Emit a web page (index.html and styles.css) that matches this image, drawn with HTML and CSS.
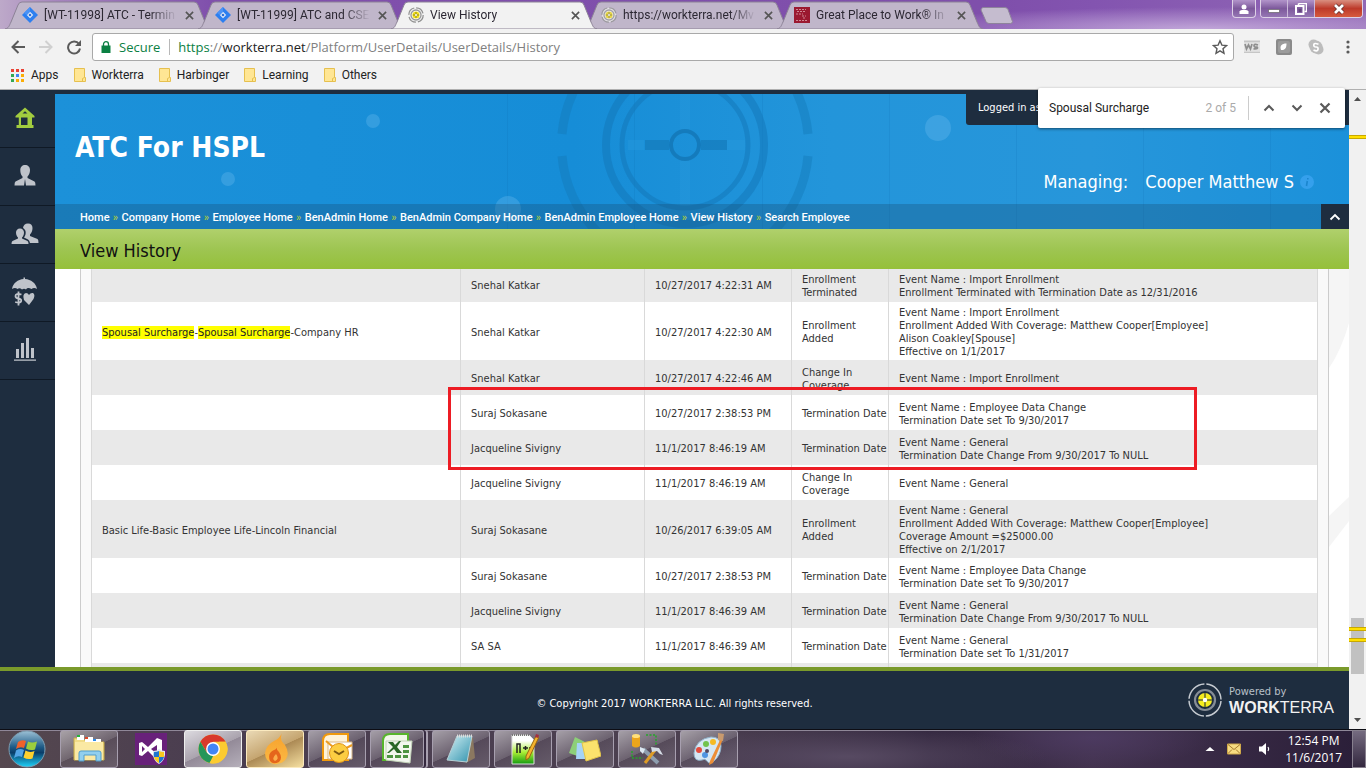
FILE: index.html
```html
<!DOCTYPE html>
<html lang="en">
<head>
<meta charset="utf-8">
<title>View History</title>
<link rel="stylesheet" href="styles.css">
</head>
<body>
<svg class="defs" width="0" height="0" aria-hidden="true">
  <defs>
    <symbol id="x" viewBox="0 0 10 10"><path d="M1 1l8 8M9 1l-8 8" stroke="currentColor" stroke-width="1.8" fill="none"/></symbol>
    <symbol id="jira" viewBox="0 0 16 16"><path d="M8 0l8 8-8 8-8-8z" fill="#2d7ff0"/><path d="M8 4.800l3.200 3.200L8 11.200 4.800 8z" fill="#e3ebf8"/><path d="M8 0v4.800L4.800 8 2 6z" fill="#4b92f5"/><circle cx="8" cy="8" r="1.300" fill="#2d6fd6"/></symbol>
    <symbol id="target" viewBox="0 0 16 16"><circle cx="8" cy="8" r="7.200" fill="#f0f0f0" stroke="#8f8f8f" stroke-width="1.200" stroke-dasharray="9.300 2"/><circle cx="8" cy="8" r="5" fill="#fff" stroke="#999" stroke-width="1.300"/><circle cx="8" cy="8" r="3.600" fill="#f3e11a"/><path d="M5 8h6M8 5v6" stroke="#8d8223"/><circle cx="8" cy="8" r="1" fill="#fff"/></symbol>
    <symbol id="tabshape" viewBox="0 0 206 28" preserveAspectRatio="none"><path d="M0 28C4 27 4 25 6 21L13 4Q14 1 17 1H189Q192 1 193 4L200 21C202 25 202 27 206 28z" stroke="#8c8296"/></symbol>
    <symbol id="folder" viewBox="0 0 12 14"><path d="M.5.5h10v9h1v4h-11z" fill="#ffe694" stroke="#e6c04f"/><path d="M8.500 13.500v-3l2-1" fill="none" stroke="#e6c04f"/></symbol>
    <linearGradient id="glass" x1="0" y1="0" x2="0" y2="1"><stop offset="0" stop-color="#9cc1d6"/><stop offset=".45" stop-color="#1d5a86"/><stop offset=".6" stop-color="#0a3d69"/><stop offset="1" stop-color="#1cd3fa"/></linearGradient>
    <linearGradient id="fire" x1="0" y1="0" x2="0" y2="1"><stop offset="0" stop-color="#f7a12c"/><stop offset="1" stop-color="#fbb944"/></linearGradient>
    <linearGradient id="pad" x1="0" y1="0" x2="1" y2="1"><stop offset="0" stop-color="#d3f0f4"/><stop offset="1" stop-color="#3193ae"/></linearGradient>
    <linearGradient id="npp" x1="0" y1="0" x2="0" y2="1"><stop offset=".2" stop-color="#fff"/><stop offset=".6" stop-color="#a9ed35"/><stop offset="1" stop-color="#129b10"/></linearGradient>
  </defs>
</svg>

<header class="browser">
  <div class="strip">
    <nav class="tabs" aria-label="Browser tabs">
      <div class="tab"><svg class="shape"><use href="#tabshape"/></svg><svg class="fav"><use href="#jira"/></svg><a href="#" class="tabname">[WT-11998] ATC - Termin</a><button class="tabclose" aria-label="Close tab"><svg><use href="#x"/></svg></button></div>
      <div class="tab"><svg class="shape"><use href="#tabshape"/></svg><svg class="fav"><use href="#jira"/></svg><a href="#" class="tabname">[WT-11999] ATC and CSE</a><button class="tabclose" aria-label="Close tab"><svg><use href="#x"/></svg></button></div>
      <div class="tab active"><svg class="shape"><use href="#tabshape"/></svg><svg class="fav"><use href="#target"/></svg><a href="#" class="tabname">View History</a><button class="tabclose" aria-label="Close tab"><svg><use href="#x"/></svg></button></div>
      <div class="tab"><svg class="shape"><use href="#tabshape"/></svg><svg class="fav dim"><use href="#target"/></svg><a href="#" class="tabname">https://workterra.net/Mv</a><button class="tabclose" aria-label="Close tab"><svg><use href="#x"/></svg></button></div>
      <div class="tab"><svg class="shape"><use href="#tabshape"/></svg><svg class="fav" viewBox="0 0 16 16"><path d="M0 0h16v16H0z" fill="#9b1930"/><path d="M2 2.500h10M3 4.500h9M2 7h7M8 9h4M9 11h3M2 13.500h12" stroke="#cf8793" stroke-dasharray="2 1"/></svg><a href="#" class="tabname">Great Place to Work® In</a><button class="tabclose" aria-label="Close tab"><svg><use href="#x"/></svg></button></div>
    </nav>
    <button class="newtab" aria-label="New tab"><svg viewBox="0 0 34 17"><path d="M3 .5h22q2 0 3 2l4.500 12q0 2-2 2H9q-2 0-3-2L1 3q0-2 2-2.500z" fill="#c5bccf" stroke="#8e839b"/></svg></button>
    <div class="winbtns">
      <button class="wb user" aria-label="Profile"><svg viewBox="0 0 12 12"><circle cx="6" cy="4" r="2.500"/><path d="M1.500 11V8.500Q2 7 4 7h4q2 0 2.500 1.500V11z"/></svg></button>
      <div class="wingroup">
        <button class="wb" aria-label="Minimize"><svg viewBox="0 0 12 12"><path d="M.5 6.500h11v3H.5z" stroke="#555" stroke-width=".6"/></svg></button>
        <button class="wb" aria-label="Restore"><svg viewBox="0 0 12 12"><path d="M3.500.5h8v8h-2M3.500.5v2" fill="none" stroke="#fff" stroke-width="1.500"/><path d="M1 3h7.500v8H1z" fill="none" stroke="#fff" stroke-width="2"/><path d="M3.500 6h3v3h-3z" fill="#63467c"/></svg></button>
        <button class="wb closewin" aria-label="Close"><svg viewBox="0 0 12 12"><path d="M2 2l8 8M10 2l-8 8" stroke="#5b2a2a" stroke-width="4.200"/><path d="M2 2l8 8M10 2l-8 8" stroke="#fff" stroke-width="2.800"/></svg></button>
      </div>
    </div>
  </div>

  <div class="toolbar">
    <button class="tool" aria-label="Back"><svg viewBox="0 0 16 16"><path d="M8.500 2L2.500 8l6 6M2.500 8H15" fill="none" stroke="#5a5a5a" stroke-width="2"/></svg></button>
    <button class="tool" aria-label="Forward"><svg viewBox="0 0 16 16"><path d="M7.500 2l6 6-6 6M13.500 8H1" fill="none" stroke="#d0d0d0" stroke-width="2"/></svg></button>
    <button class="tool" aria-label="Reload"><svg viewBox="0 0 16 16"><path d="M13 5A6 6 0 1 0 14 9.500" fill="none" stroke="#5a5a5a" stroke-width="2"/><path d="M15 1v6H9z" fill="#5a5a5a"/></svg></button>
    <div class="omni">
      <svg class="lock" viewBox="0 0 10 12"><path d="M.5 4.500h9V12h-9z" fill="#0b8043"/><path d="M2.500 5V3.200a2.500 2.500 0 0 1 5 0V5" fill="none" stroke="#0b8043" stroke-width="1.300"/></svg>
      <span class="secure">Secure</span><span class="bar"></span>
      <div class="url" role="textbox" aria-label="Address" tabindex="0"><span class="scheme">https</span>://<span class="host">workterra.net</span>/Platform/UserDetails/UserDetails/History</div>
      <button class="star" aria-label="Bookmark"><svg viewBox="0 0 16 16"><path d="M8 1.800l1.900 4.300 4.600.5-3.500 3.100 1 4.600L8 11.900l-4 2.400 1-4.600L1.500 6.600l4.600-.5z" fill="none" stroke="#5a5a5a" stroke-width="1.400"/></svg></button>
    </div>
    <div class="exts">
      <button aria-label="WS"><svg viewBox="0 0 16 16"><path d="M0 1.500h16v2H0zM0 12.500h16v1.500H0z" fill="#c6c6c6"/><path d="M0 4h16v8H0z" fill="#e2e2e2"/><path d="M1 5l1.500 5L4.500 6l2 4L8 5M14 6q-4-1.500-4 .6t3 1.400q2 2.200-3.500 1.800" fill="none" stroke="#8e8e8e" stroke-width="1.700"/></svg></button>
      <button aria-label="Extension"><svg viewBox="0 0 16 16"><rect width="16" height="16" rx="2" fill="#8a8a8a"/><rect x="2" y="2" width="12" height="12" rx="2" fill="#9c9c9c"/><path d="M5 11c-1.500-4 .5-6.500 5.500-6.500 0 4.500-1.500 7-5.500 6.500z" fill="#fff"/></svg></button>
      <button aria-label="Skype"><svg viewBox="0 0 16 16"><circle cx="5.500" cy="5.500" r="5" fill="#bcbcbc"/><circle cx="10.500" cy="10.500" r="5" fill="#bcbcbc"/><circle cx="8" cy="8" r="6.500" fill="#bcbcbc"/><path d="M10.500 5.300Q6 3.500 5.800 5.800T8 8t2 2.400-4.500.6" fill="none" stroke="#fff" stroke-width="1.700"/></svg></button>
      <button aria-label="Menu"><svg viewBox="0 0 16 16" fill="#5a5a5a"><circle cx="8" cy="3" r="1.600"/><circle cx="8" cy="8" r="1.600"/><circle cx="8" cy="13" r="1.600"/></svg></button>
    </div>
  </div>

  <nav class="bookmarks" aria-label="Bookmarks">
    <a href="#"><svg class="apps" viewBox="0 0 13 13"><path d="M0 0h3v3H0zM5 0h3v3H5zM10 0h3v3h-3z" fill="#ea4335"/><path d="M0 5h3v3H0zM0 10h3v3H0z" fill="#34a853"/><path d="M5 5h3v3H5z" fill="#4285f4"/><path d="M10 5h3v3h-3zM5 10h3v3H5zM10 10h3v3h-3z" fill="#fbad05"/></svg>Apps</a>
    <a href="#"><svg class="folder"><use href="#folder"/></svg>Workterra</a>
    <a href="#"><svg class="folder"><use href="#folder"/></svg>Harbinger</a>
    <a href="#"><svg class="folder"><use href="#folder"/></svg>Learning</a>
    <a href="#"><svg class="folder"><use href="#folder"/></svg>Others</a>
  </nav>

  <form class="find" role="search">
    <input type="text" value="Spousal Surcharge" aria-label="Find in page">
    <span class="count">2 of 5</span>
    <span class="findsep"></span>
    <button type="button" aria-label="Previous"><svg viewBox="0 0 12 12"><path d="M1.500 8.500L6 4l4.500 4.500" fill="none" stroke="#5a5a5a" stroke-width="2"/></svg></button>
    <button type="button" aria-label="Next"><svg viewBox="0 0 12 12"><path d="M1.500 3.500L6 8l4.500-4.500" fill="none" stroke="#5a5a5a" stroke-width="2"/></svg></button>
    <button type="button" aria-label="Close find bar"><svg viewBox="0 0 12 12"><path d="M1.500 1.500l9 9M10.500 1.500l-9 9" fill="none" stroke="#5a5a5a" stroke-width="2.200"/></svg></button>
  </form>
</header>

<div class="viewport">
  <div class="site">
    <div class="upper">
      <nav class="side" aria-label="Main">
        <a href="#" aria-label="Home" class="current"><svg viewBox="0 0 28 28"><path d="M14 4.500L4.500 13v1.500h3.300V22H5.500v3h17v-3h-1.500v-7.500h2.500V13zM14 8.200l2.500 2.300h-5zM10 14.500h6.500V22H10z" fill-rule="evenodd"/></svg></a>
        <a href="#" aria-label="Employee"><svg viewBox="0 0 28 28"><path d="M14 4c3 0 5 2 5 5 0 3-1 5-2.500 6.500V17l7 3.500q1 .5 1 4h-9.500L14 18l-1 6.500H3.500q0-3.500 1-4l7-3.500v-1.500C10 14 9.300 12 9.300 9c0-3 2-5 4.700-5z"/></svg></a>
        <a href="#" aria-label="Groups"><svg viewBox="0 0 28 28"><path d="M9 9.500c2.500 0 4 1.700 4 4 0 2.500-1 4-2 5v1l5.500 2.500q1 .5 1 3H.5q0-2.500 1-3L7 19.500v-1c-1-1-2-2.500-2-5 0-2.300 1.500-4 4-4z"/><path d="M17 4.500c3 0 4.500 2 4.500 4.500 0 3-1 5-2.500 6.500v1.500l7.500 3q1 .7 1 4h-8.500q-.5-3-2-3.500L13 18.500c1.500-2 2-4 1.500-6.500-.5-1.500-1.500-2.500-2.500-3 .3-2.500 2-4.500 5-4.500z"/></svg></a>
        <a href="#" aria-label="Benefits"><svg viewBox="0 0 28 28"><path d="M12.500.5h1.500V2C20 2.500 25 6 26 12q-3-2-5.500 0-4-2-5.500.5-2-1.500-4 0-2.500-2-4.500-.5Q4 10 1 12C2 6 7 2.500 12.500 2z"/><path d="M18 28l-5-5q-2-6 2-7 2 0 3 2 1.500-2.500 4-2 2.500 1.500.5 6z"/><path d="M10.500 17.500q-6-1.500-6 1.500 0 2 2.700 2.500 3.300.5 3 2.500-.5 2.500-6 1M7.500 14.500v14" fill="none" stroke="#bfc3ca" stroke-width="1.800"/></svg></a>
        <a href="#" aria-label="Reports"><svg viewBox="0 0 28 28"><path d="M5 14h3v9H5zM10 8h3v15h-3zM15 3h3v20h-3zM20 13h3v10h-3zM3 24.500h22v1.200H3z"/></svg></a>
      </nav>

      <main class="main">
        <div class="masthead">
          <svg class="art" viewBox="0 0 1294 135" preserveAspectRatio="xMinYMin slice" aria-hidden="true">
            <path d="M452.500 0v135M579.500 0v135M707.500 0v135M834.500 0v135M961.500 0v135M1088.500 0v135M1215.500 0v135" stroke="#0b6cb0" stroke-opacity=".16"/>
            <g fill="none" stroke="#1479b9" stroke-opacity=".55">
              <path d="M573 51h16M672 51h18M630-13v50M630 66v55" stroke="#2a9bde" stroke-width="10" stroke-opacity=".35"/>
              <circle cx="630" cy="51" r="14" stroke-width="4" stroke-opacity=".9"/>
              <circle cx="630" cy="51" r="63" stroke-width="5"/>
              <circle cx="630" cy="51" r="79" stroke-width="8"/>
              <path d="M507 40A123 123 0 0 1 622-72M638-72A123 123 0 0 1 753 40M753 62A123 123 0 0 1 638 174M622 174A123 123 0 0 1 507 62" stroke-width="9" stroke-opacity=".45"/>
              <path d="M590 51h24M646 51h26" stroke-width="10" stroke-opacity=".65"/>
            </g>
            <g fill="#6fbdf0" fill-opacity=".32"><circle cx="173" cy="85" r="7"/><circle cx="318" cy="27" r="7"/><circle cx="453" cy="115" r="13"/><circle cx="883" cy="34" r="13"/></g>
          </svg>
          <div class="banner">
            <h1>ATC For HSPL</h1>
            <div class="account">
              <div class="logged">Logged in as</div>
              <div class="managing"><span>Managing:</span><span>Cooper Matthew S</span><svg viewBox="0 0 14 14"><circle cx="7" cy="7" r="7" fill="#35a0ec"/><path d="M7.800 3v1.500M7.300 6L6.500 11" stroke="#1b86cf" stroke-width="1.600"/></svg></div>
            </div>
          </div>
          <div class="crumbbar">
            <nav class="crumbs" aria-label="Breadcrumb"><a href="#">Home</a><i>»</i><a href="#">Company Home</a><i>»</i><a href="#">Employee Home</a><i>»</i><a href="#">BenAdmin Home</a><i>»</i><a href="#">BenAdmin Company Home</a><i>»</i><a href="#">BenAdmin Employee Home</a><i>»</i><a href="#">View History</a><i>»</i><a href="#">Search Employee</a></nav>
            <button class="collapse" aria-label="Collapse header"><svg viewBox="0 0 12 12"><path d="M1.500 8.500L6 4l4.500 4.500" fill="none" stroke="#fff" stroke-width="1.800"/></svg></button>
          </div>
        </div>
        <h2 class="pagetitle">View History</h2>
        <div class="scroller">
          <div class="panel">
            <table class="history">
              <colgroup><col class="c1"><col class="c2"><col class="c3"><col class="c4"><col></colgroup>
              <tbody>
              <tr><td></td><td>Snehal Katkar</td><td>10/27/2017 4:22:31 AM</td><td>Enrollment Terminated</td><td>Event Name : Import Enrollment<br>Enrollment Terminated with Termination Date as 12/31/2016</td></tr>
              <tr><td><mark>Spousal Surcharge</mark>-<mark>Spousal Surcharge</mark>-Company HR</td><td>Snehal Katkar</td><td>10/27/2017 4:22:30 AM</td><td>Enrollment Added</td><td>Event Name : Import Enrollment<br>Enrollment Added With Coverage: Matthew Cooper[Employee]<br>Alison Coakley[Spouse]<br>Effective on 1/1/2017</td></tr>
              <tr><td></td><td>Snehal Katkar</td><td>10/27/2017 4:22:46 AM</td><td>Change In Coverage</td><td>Event Name : Import Enrollment</td></tr>
              <tr><td></td><td>Suraj Sokasane</td><td>10/27/2017 2:38:53 PM</td><td class="one">Termination Date</td><td>Event Name : Employee Data Change<br>Termination Date set To 9/30/2017</td></tr>
              <tr><td></td><td>Jacqueline Sivigny</td><td>11/1/2017 8:46:19 AM</td><td class="one">Termination Date</td><td>Event Name : General<br>Termination Date Change From 9/30/2017 To NULL</td></tr>
              <tr><td></td><td>Jacqueline Sivigny</td><td>11/1/2017 8:46:19 AM</td><td>Change In Coverage</td><td>Event Name : General</td></tr>
              <tr><td>Basic Life-Basic Employee Life-Lincoln Financial</td><td>Suraj Sokasane</td><td>10/26/2017 6:39:05 AM</td><td>Enrollment Added</td><td>Event Name : General<br>Enrollment Added With Coverage: Matthew Cooper[Employee]<br>Coverage Amount =$25000.00<br>Effective on 2/1/2017</td></tr>
              <tr><td></td><td>Suraj Sokasane</td><td>10/27/2017 2:38:53 PM</td><td class="one">Termination Date</td><td>Event Name : Employee Data Change<br>Termination Date set To 9/30/2017</td></tr>
              <tr><td></td><td>Jacqueline Sivigny</td><td>11/1/2017 8:46:39 AM</td><td class="one">Termination Date</td><td>Event Name : General<br>Termination Date Change From 9/30/2017 To NULL</td></tr>
              <tr><td></td><td>SA SA</td><td>11/1/2017 8:46:39 AM</td><td class="one">Termination Date</td><td>Event Name : General<br>Termination Date set To 1/31/2017</td></tr>
              <tr><td></td><td></td><td></td><td></td><td></td></tr>
              </tbody>
            </table>
            <div class="callout"></div>
          </div>
          <svg class="edge" viewBox="0 0 20 398" preserveAspectRatio="xMinYMin slice" aria-hidden="true"><path d="M0 0h20v54Q12 82 0 99zM20 228v24L0 278v-31z" fill="#f5f5f5"/></svg>
        </div>
      </main>
    </div>
    <footer class="foot">
      <p>© Copyright 2017 WORKTERRA LLC. All rights reserved.</p>
      <div class="brand">
        <svg viewBox="0 0 34 34"><g fill="none"><circle cx="17" cy="17" r="16" stroke="#c5cad0" stroke-width="1.500" stroke-dasharray="23.100 2" stroke-dashoffset="-1"/><circle cx="17" cy="17" r="10" stroke="#868d96" stroke-width="2.200"/><circle cx="17" cy="17" r="7" fill="#f6ec1f"/><path d="M10 17h5M19 17h5M17 10v5M17 19v5" stroke="#5f6330" stroke-width="1.500"/><circle cx="17" cy="17" r="2.200" fill="#fff"/></g></svg>
        <div><span class="powered">Powered by</span><span class="wt"><b>WORK</b>TERRA</span></div>
      </div>
    </footer>
  </div>
  <div class="scrollbar" aria-hidden="true">
    <svg viewBox="0 0 17 17"><path d="M5 11l3.500-4 3.500 4z" fill="#505050"/></svg>
    <div class="track"><i class="mark m1"></i><i class="thumb"></i><i class="mark m2"></i><i class="mark m3"></i></div>
    <svg viewBox="0 0 17 17"><path d="M5 6l3.500 4L12 6z" fill="#505050"/></svg>
  </div>
</div>

<footer class="taskbar">
  <button class="start" aria-label="Start"><svg viewBox="0 0 38 38"><circle cx="19" cy="19" r="18" fill="url(#glass)" stroke="#7d9db1"/><path d="M10 12q4-3 8-1l-2 7q-4-2-8 1z" fill="#f0622a"/><path d="M20 11.500q4 2 9 0l-2 8q-5 1.500-9-1z" fill="#9bcd3d"/><path d="M8 20.500q4-2.500 8-.5l-2 7q-4-2-8 1z" fill="#54a5e5"/><path d="M17.500 20.500q4 2.500 9 .5l-2 7.500q-5 1.500-9-1z" fill="#fdd02e"/></svg></button>
  <div class="apps-row">
    <button class="task" aria-label="Explorer"><svg viewBox="0 0 32 32"><path d="M1 5h8l2 2h10l2 2h8v18H1z" fill="#f1dc88" stroke="#c8ad4b"/><path d="M4 2h7v5H4zM12 4h8v5h-8zM20 6h8v5h-8z" fill="#fff"/><path d="M4 2h3v2H4z" fill="#25b53a"/><path d="M12 4h3v2h-3z" fill="#e04a2a"/><path d="M20 6h3v2h-3z" fill="#2c8ae8"/><path d="M2 9h28v18H2z" fill="#fae9a4"/><path d="M6 28v-8q0-2 2-2h18q2 0 2 2v8h-5v-6H11v6z" fill="#91cfee" stroke="#519dcb"/></svg></button>
    <button class="task plain" aria-label="Visual Studio"><svg viewBox="0 0 32 32"><path d="M0 0h32v32H0z" fill="#68217a"/><path d="M4 10l3-1 6 5 9-9 5 2v18l-5 2-9-9-6 5-3-1zm3 3v6l3-3zm15-1l-6 4 6 5z" fill="#fff" fill-rule="evenodd"/><path d="M18 18q4 0 6-2 3 2 6 2 1 9-6 13-7-4-6-13z" fill="#dfe7ee"/><path d="M24 18v6h-5q-.5-2 0-5 3 0 5-1M24 24h5q-1 4-5 6z" fill="#1f76cf"/><path d="M24 18q2 1 5 1v5h-5M24 24v6q-4-2-5-6z" fill="#f7c81f"/></svg></button>
    <button class="task bright" aria-label="Chrome"><svg viewBox="0 0 32 32"><circle cx="16" cy="16" r="14.500" fill="#fc3"/><path d="M3.400 8.800A14.500 14.500 0 0 1 28.600 8.800H16L9.800 19.600z" fill="#d8392b"/><path d="M3.400 8.800L9.800 19.600 16 23.200 12.500 30A14.500 14.500 0 0 1 3.400 8.800z" fill="#24965a"/><path d="M12.500 30L22 19.600V8.800h6.600A14.500 14.500 0 0 1 12.500 30z" fill="#fccb30"/><circle cx="16" cy="16" r="6.900" fill="#fff"/><circle cx="16" cy="16" r="5.500" fill="#4285f4"/></svg></button>
    <button class="task warm" aria-label="Flame"><svg viewBox="0 0 32 32"><path d="M23 0q-3 7 3 12 5 8 1 14-5 6-12 5-9-2-9-11 1-8 9-12 6-3 8-8z" fill="url(#fire)"/><path d="M18 13q-1 4 2 6 4 6 0 10-6 3-9-1-3-8 4-11 3-1 3-4z" fill="#e5651b"/><path d="M17 21q4 5-1 7-4-2 1-7z" fill="#fbae4c"/></svg></button>
    <button class="task" aria-label="Outlook"><svg viewBox="0 0 32 32"><path d="M2 27V8q0-7 7-7h18v26z" fill="#fff3d8" stroke="#f0990c" stroke-width="2"/><path d="M7 9h24v17H7z" fill="#fff" stroke="#d8b787"/><path d="M5 8l13 11 13-7" fill="none" stroke="#ec9b20" stroke-width="2"/><circle cx="18" cy="20" r="9.500" fill="#fccd42" stroke="#e09317"/><path d="M13 18l5 3 5-3" fill="none" stroke="#7d5a13" stroke-width="2"/></svg></button>
    <button class="task stack" aria-label="Excel"><svg viewBox="0 0 32 32"><path d="M2 27V8q0-7 7-7h18v26z" fill="#f1f8e9" stroke="#58b52c" stroke-width="2"/><path d="M5 8h26l-2 22-24-3z" fill="#f3f7ef" stroke="#c4d3ba"/><path d="M22 12h6v3h-6zM22 17h6v3h-6zM22 22h5v3h-5zM6 22h6v3H6zM14 22h6v3h-6z" fill="#4e9442"/><path d="M7 9h5l2 3 4-4h2l-4 6 5 6h-5l-3-4-5 4H6l6-6z" fill="#2a6727"/></svg></button>
    <button class="task" aria-label="Notepad"><svg viewBox="0 0 32 32"><path d="M12 3l16 2 2 20-9 5z" fill="#8b7860"/><path d="M12 3h15l-5 26-20-2z" fill="url(#pad)" stroke="#b7d0d5"/><path d="M12 3h16" stroke="#ddd" stroke-width="3" stroke-dasharray="1 1"/></svg></button>
    <button class="task" aria-label="Notepad++"><svg viewBox="0 0 32 32"><path d="M5 2h17l5 5v24H5z" fill="url(#npp)" stroke="#dedede"/><path d="M5 2h18" stroke="#777" stroke-width="2" stroke-dasharray="1 1"/><path d="M10 20v-9h3v9M16 15h5M18.500 13v4M22 15h4" fill="none" stroke="#222" stroke-width="1.500"/><path d="M29 3l3 1-10 21-3 2v-4z" fill="#f4b42d" stroke="#976611"/><path d="M29 1l3 1-1 3-3-1z" fill="#a33041"/></svg></button>
    <button class="task" aria-label="Sticky Notes"><svg viewBox="0 0 32 32"><path d="M6 4l14 7-6 14L0 20z" fill="#8dcf78"/><path d="M8 10h14v16H7z" fill="#a5d3f7"/><path d="M13 10l15-3 4 16-15 5z" fill="#fbe26d" stroke="#e1c34a"/></svg></button>
    <button class="task" aria-label="Database tools"><svg viewBox="0 0 32 32"><path d="M1 3v10q4 3 8 0V3z" fill="#eca51b"/><ellipse cx="5" cy="3" rx="4" ry="2" fill="#ffe07a"/><path d="M15 2h10v11M1 18v7h11" fill="none" stroke="#25a62a" stroke-width="1.500" stroke-dasharray="2 1.500"/><path d="M12 16l15 14" stroke="#8e9eaf" stroke-width="4"/><path d="M24 17L14 30" stroke="#dd9b26" stroke-width="3"/><path d="M20 14l8 1 4 7-3-1-3-3-5 1z" fill="#d5dce5"/><path d="M9 14l5 2-2 5-3-3z" fill="#dce8f2"/></svg></button>
    <button class="task" aria-label="Paint"><svg viewBox="0 0 32 32"><path d="M18 4q10 0 10 9t-7 15q-5 4-7 0-2-3-5-1-8 2-8-7Q3 6 18 4z" fill="#d5e7f3" stroke="#91b2c9"/><circle cx="13" cy="11" r="3" fill="#72c34d"/><circle cx="20" cy="9" r="3" fill="#f5ba24"/><circle cx="6" cy="17" r="3" fill="#e34c3d"/><circle cx="12" cy="22" r="3" fill="#4e95e2"/><circle cx="14" cy="18" r="2" fill="#514861"/><path d="M28 5l2 1-10 24-4 2 1-4z" fill="#ec8e37"/><path d="M25 0l6 1-1 7-5-1z" fill="#c99a6e"/></svg></button>
  </div>
  <div class="tray">
    <svg viewBox="0 0 14 14"><path d="M2.500 9L7 5l4.500 4z" fill="#fff"/></svg>
    <svg viewBox="0 0 14 14"><path d="M.5 2h13v10H.5z" fill="#f7dc82" stroke="#d0a94a"/><path d="M1 2.500l6 5 6-5M1 11.500l4-4M13 11.500l-4-4" fill="none" stroke="#a5792c"/></svg>
    <svg viewBox="0 0 14 14"><path d="M1 4.500h3L8 1v12L4 9.500H1z" fill="#fff"/><path d="M10 5q1.500 2 0 4" fill="none" stroke="#fff" stroke-width="1.200"/></svg>
    <div class="clock"><time>12:54 PM</time><time>11/6/2017</time></div>
    <button class="desk" aria-label="Show desktop"></button>
  </div>
</footer>
</body>
</html>
```

FILE: styles.css
```css
:root {
  --navy: #1e2d3f;
  --ui: Roboto, "Open Sans", "Noto Sans", sans-serif;
  --ui-wide: "Open Sans", "Noto Sans", sans-serif;
  --page: "DejaVu Sans Condensed", "DejaVu Sans", "Noto Sans", sans-serif;
}
* { box-sizing: border-box; }
body {
  margin: 0;
  height: 100vh;
  display: flex;
  flex-direction: column;
  overflow: hidden;
  font-family: var(--ui);
  font-size: 12px;
  color: #333;
}
button { border: 0; padding: 0; margin: 0; background: none; font: inherit; color: inherit; display: grid; place-items: center; }
a { color: inherit; text-decoration: none; }
svg { display: block; }
.defs { position: absolute; }

/* Browser frame */
.browser { position: relative; z-index: 5; flex: none; background: #f2f2f2; border-bottom: 1px solid #b0b0b0; }
.strip {
  height: 29px;
  display: flex;
  align-items: flex-end;
  padding-left: 5px;
  background:
    radial-gradient(ellipse 320px 22px at 88% 100%, #c0a5d8, transparent),
    linear-gradient(90deg, #bda9c9 0, #a584bd 60px, #8050ac 210px, #7f4fab 1000px, #8354b0 80%, #9168b5);
}
.tabs { display: flex; }
.tab {
  position: relative;
  width: 206px;
  height: 28px;
  margin-right: -13px;
  padding: 0 15px 0 17px;
  display: flex;
  align-items: center;
  color: #2c2833;
}
.tab .shape { position: absolute; inset: 0; width: 100%; height: 100%; fill: #c0b6ca; }
.tab.active { z-index: 2; }
.tab.active .shape { fill: #f2f2f2; }
.fav { position: relative; width: 16px; height: 16px; flex: none; margin-right: 6px; }
.fav.dim { opacity: .75; }
.tabname {
  position: relative;
  flex: 1;
  min-width: 0;
  white-space: nowrap;
  -webkit-mask-image: linear-gradient(90deg, #000 80%, transparent);
  mask-image: linear-gradient(90deg, #000 80%, transparent);
}
.tabclose { position: relative; width: 14px; height: 16px; margin-left: 5px; color: #555; }
.tabclose svg { width: 9px; height: 9px; }
.newtab { margin: 0 0 5px 10px; }
.newtab svg { width: 34px; height: 17px; }
.winbtns { display: flex; align-self: flex-start; gap: 4px; margin-left: auto; padding-right: 3px; }
.wb, .wingroup { border: 1px solid #ddd1e6; border-top: 0; border-radius: 0 0 4px 4px; }
.wb { height: 18px; width: 24px; background: linear-gradient(#b294ca, #7d599c 50%, #9576b3); }
.wb svg { width: 12px; height: 12px; fill: #fff; }
.wingroup { display: flex; overflow: hidden; }
.wingroup .wb { width: 27px; height: 17px; border: 0; border-right: 1px solid #cbb9da; border-radius: 0; }
.wingroup .closewin { width: 47px; border: 0; background: linear-gradient(#d98f80, #bd3a2a 50%, #d65a3d); }

.toolbar { height: 36px; display: flex; align-items: center; padding: 0 10px; }
.tool { width: 16px; margin-right: 12px; }
.tool svg { width: 16px; height: 16px; }
.tool:nth-child(3) { margin-right: 10px; }
.omni {
  flex: 1;
  height: 28px;
  display: flex;
  align-items: center;
  padding: 0 5px 0 8px;
  border: 1px solid #a9a9a9;
  border-radius: 3px;
  background: #fff;
  font-family: var(--ui-wide);
  font-size: 13px;
}
.lock { width: 10px; height: 12px; }
.secure { color: #0b8043; margin-left: 8px; }
.bar { width: 1px; height: 16px; margin: 0 8px 0 9px; background: #b8b8b8; }
.url { color: #808080; flex: 1; white-space: nowrap; }
.scheme { color: #0b8043; }
.host { color: #222; }
.star svg { width: 16px; height: 16px; }
.exts { display: flex; gap: 16px; margin: 0 0 0 10px; }
.exts svg { width: 16px; height: 16px; }

.bookmarks { height: 24px; display: flex; align-items: center; gap: 15px; padding: 0 11px 4px; color: #222; }
.bookmarks a { display: flex; align-items: center; }
.apps { width: 13px; height: 13px; margin-right: 7px; }
.folder { width: 12px; height: 14px; margin-right: 6px; }

.find {
  position: absolute;
  right: 21px;
  top: 88px;
  width: 307px;
  height: 40px;
  display: flex;
  align-items: center;
  padding: 0 14px 0 11px;
  background: #fff;
  border-radius: 2px;
  box-shadow: 0 1px 3px rgba(0, 0, 0, .5);
}
.find input { flex: 1; min-width: 0; border: 0; padding: 0; outline: 0; font: inherit; color: #222; background: none; }
.count { color: #aaa; }
.findsep { width: 1px; height: 24px; margin: 0 14px 0 12px; background: #ccc; }
.find button { width: 12px; margin-left: 16px; }
.find .findsep + button { margin-left: 0; }
.find svg { width: 12px; height: 12px; }

/* Page viewport */
.viewport { flex: 1; min-height: 0; display: flex; background: var(--navy); }
.site { flex: 1; min-width: 0; display: flex; flex-direction: column; font-family: var(--page); font-size: 11px; line-height: 13px; }
.upper { flex: 1; min-height: 0; display: flex; }
.side { width: 55px; flex: none; background: var(--navy); }
.side a { height: 58px; display: grid; place-items: center; padding: 0 6px 4px 0; border-bottom: 1px solid #0f1925; }
.side svg { width: 28px; height: 28px; fill: #bfc3ca; overflow: visible; }
.side .current svg { fill: #a2cc3f; }
.main { flex: 1; min-width: 0; display: flex; flex-direction: column; padding-top: 4px; }
.masthead {
  position: relative;
  flex: none;
  color: #fff;
  background: linear-gradient(90deg, #1c91d9, #168dd7 40%, #2395da 60%, #2796da 80%, #1b91da);
}
.art { position: absolute; inset: 0; width: 100%; height: 100%; }
.banner { position: relative; height: 110px; display: flex; justify-content: space-between; }
h1 { margin: 0; padding: 37px 0 0 20px; font-size: 28px; line-height: 34px; }
.account { width: 383px; display: flex; flex-direction: column; justify-content: space-between; margin-top: -4px; }
.logged { height: 35px; padding: 11px 12px; background: var(--navy); border-radius: 0 0 0 3px; }
.managing { display: flex; align-items: center; justify-content: flex-end; padding: 0 35px 11px 0; font-size: 18px; line-height: 22px; }
.managing span + span { margin-left: 17px; }
.managing svg { width: 14px; height: 14px; margin-left: 6px; }
.crumbbar { position: relative; height: 25px; display: flex; justify-content: space-between; background: rgba(24, 72, 108, .3); }
.crumbs { display: flex; align-items: center; padding: 1px 0 0 25px; font-family: var(--ui); font-weight: 500; white-space: nowrap; }
.crumbs i { width: 12px; text-align: center; font-style: normal; color: #a8c843; }
.collapse { width: 28px; background: var(--navy); }
.collapse svg { width: 12px; height: 12px; }
.pagetitle {
  flex: none;
  margin: 0;
  padding: 3px 25px 0;
  font-size: 18px;
  font-weight: 400;
  line-height: 37px;
  color: #111;
  background: linear-gradient(#b0d06c, #9ec552 50%, #95c03a);
}
.scroller { flex: 1; min-height: 0; overflow: hidden; display: flex; padding-left: 25px; background: #fff; }
.edge { width: 20px; height: 398px; flex: none; }
.panel { position: relative; flex: 1; margin-top: -2px; height: 460px; padding: 0 10px; background: #f9f9f9; border: solid #ccc; border-width: 0 1px; }
.history { width: 100%; table-layout: fixed; border-spacing: 0; border-left: 1px solid #d9d9d9; background: #fff; }
.c1 { width: 369px; }
.c2 { width: 184px; }
.c3 { width: 147px; }
.c4 { width: 97px; }
.history td { height: 35px; padding: 4px 0 2px 10px; border-right: 1px solid #d9d9d9; vertical-align: middle; }
.history tr:nth-child(odd) { background: #e9e9e9; }
.history .one { white-space: nowrap; }
mark { background: #ff0; color: #222; }
.callout { position: absolute; left: 367px; top: 120px; width: 749px; height: 83px; border: 3px solid #ed1c24; }

.foot {
  flex: none;
  display: grid;
  grid-template-columns: 1fr auto 1fr;
  align-items: center;
  height: 62px;
  padding: 0 15px;
  border-top: 4px solid #7a9a2b;
  background: var(--navy);
  color: #fff;
}
.foot p { grid-column: 2; margin: 6px 0 0; }
.brand { justify-self: end; display: flex; align-items: center; gap: 7px; }
.brand svg { width: 34px; height: 34px; }
.brand span { display: block; }
.powered { color: #b9c0c8; line-height: 14px; }
.wt { font: 16px/17px "Liberation Sans", Arial, sans-serif; color: #f2f2f2; }

.scrollbar { width: 17px; flex: none; display: flex; flex-direction: column; background: #f1f1f1; }
.scrollbar svg { width: 17px; height: 17px; }
.track { position: relative; flex: 1; }
.thumb { position: absolute; left: 2px; right: 2px; bottom: 38px; height: 56px; background: #c1c1c1; }
.mark { position: absolute; left: 0; right: 0; height: 4px; background: #ffdf00; border: solid #c8a800; border-width: 1px 0; }
.m1 { top: 28px; }
.m2 { bottom: 81px; }
.m3 { bottom: 70px; }

/* Taskbar */
.taskbar {
  height: 39px;
  flex: none;
  display: flex;
  align-items: center;
  padding-left: 8px;
  border-top: 1px solid #0d0d14;
  box-shadow: inset 0 1px #8f8798;
  color: #fff;
  font-family: var(--ui-wide);
  background:
    radial-gradient(ellipse 200px 30px at 62% 70%, #574a62, transparent),
    radial-gradient(ellipse 120px 30px at 80% 20%, #4c3a60, transparent),
    linear-gradient(90deg, #55484f, #4a3d50 15%, #4c4050 50%, #33273f 68%, #43334f 80%, #2a1e38);
}
.start { margin-right: 14px; }
.start svg { width: 38px; height: 38px; }
.apps-row { display: flex; gap: 4px; }
.task {
  width: 58px;
  height: 38px;
  border: 1px solid #a79faf;
  border-radius: 3px;
  background: linear-gradient(155deg, rgba(255, 255, 255, .5), rgba(255, 255, 255, .18) 50%, rgba(255, 255, 255, .06) 51%, rgba(255, 255, 255, .15));
}
.task svg { width: 32px; height: 32px; }
.task.plain { border-color: transparent; background: none; }
.task.bright { border-color: #eee; background: linear-gradient(155deg, #dcdadf, #aaa3ae 50%, #938a98 51%, #b5afba); }
.task.warm { border-color: #fbeac0; background: linear-gradient(155deg, #ead9b5, #c5a570 50%, #ac8a55 51%, #f5dfa0); }
.task.stack { width: 54px; margin-right: 4px; box-shadow: 2px 0 #35293f, 4px 0 #a79faf; }
.tray { margin-left: auto; height: 100%; display: flex; align-items: center; }
.tray svg { width: 14px; height: 14px; margin-right: 10px; }
.tray svg + svg + svg { margin: 0 13px 0 7px; }
.clock { text-align: center; line-height: 17px; }
.clock time { display: block; }
.desk { width: 14px; height: 38px; margin-left: 10px; border: 1px solid #87808e; background: linear-gradient(#756b80, #33283f); }
```
